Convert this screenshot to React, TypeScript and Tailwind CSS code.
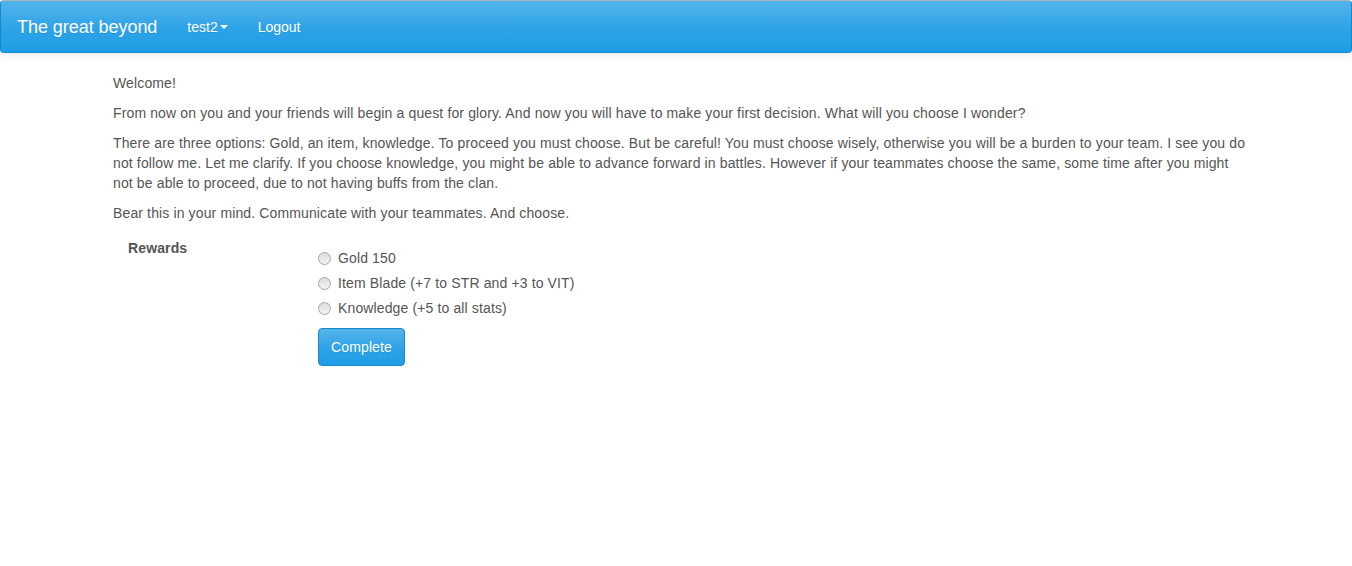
export default function App() {
    const rewards = [
        "Gold 150",
        "Item Blade (+7 to STR and +3 to VIT)",
        "Knowledge (+5 to all stats)",
    ];

    return (
        <div className="min-h-[566px] bg-white text-[14px] leading-[20px] text-[#555555]" style={{ fontFamily: '"Liberation Sans", Arial, sans-serif' }}>
            {/* Navbar */}
            <div className="flex h-[53px] items-center rounded-[4px] border border-[#1089d0] border-t-[#a8b4bc] bg-gradient-to-b from-[#54b4eb] via-[#2fa4e7] to-[#1d9ce5] shadow-[0_1px_10px_rgba(0,0,0,0.1)]">
                <a className="pl-[16px] pr-[30px] text-[18px] tracking-[-0.05px] text-white [text-shadow:0_1px_0_rgba(0,0,0,0.1)]">The great beyond</a>
                <a className="flex items-center pr-[30px] text-white [text-shadow:0_1px_0_rgba(0,0,0,0.1)]">
                    test2
                    <span className="ml-[2px] mt-[1px] inline-block h-0 w-0 border-x-[4px] border-t-[4px] border-x-transparent border-t-white" />
                </a>
                <a className="text-white [text-shadow:0_1px_0_rgba(0,0,0,0.1)]">Logout</a>
            </div>

            <div className="ml-[113px] mt-[20px] w-[1136px] tracking-[0.13px]">
                <p className="mb-[10px]">Welcome!</p>
                <p className="mb-[10px]">From now on you and your friends will begin a quest for glory. And now you will have to make your first decision. What will you choose I wonder?</p>
                <p className="mb-[10px]">There are three options: Gold, an item, knowledge. To proceed you must choose. But be careful! You must choose wisely, otherwise you will be a burden to your team. I see you do not follow me. Let me clarify. If you choose knowledge, you might be able to advance forward in battles. However if your teammates choose the same, some time after you might not be able to proceed, due to not having buffs from the clan.</p>
                <p className="mb-[10px]">Bear this in your mind. Communicate with your teammates. And choose.</p>

                {/* Rewards form */}
                <div className="mt-[15px] flex">
                    <div className="w-[190px] pl-[15px] font-bold">Rewards</div>
                    <div className="flex flex-col pl-[15px] pt-[10px]">
                        {rewards.map((reward) => (
                            <label key={reward} className="mb-[5px] flex h-[20px] items-center">
                                <input
                                    type="radio"
                                    name="reward"
                                    className="mr-[7px] h-[13px] w-[13px] appearance-none rounded-full border border-[#a6a6a6] bg-gradient-to-b from-[#dcdcdc] to-[#f4f4f4]"
                                />
                                {reward}
                            </label>
                        ))}
                        <button className="mt-[5px] h-[38px] w-[87px] rounded-[4px] border border-[#178acc] bg-gradient-to-b from-[#54b4eb] via-[#2fa4e7] to-[#1d9ce5] text-white [text-shadow:0_1px_0_rgba(0,0,0,0.1)]">
                            Complete
                        </button>
                    </div>
                </div>
            </div>
        </div>
    );
}
